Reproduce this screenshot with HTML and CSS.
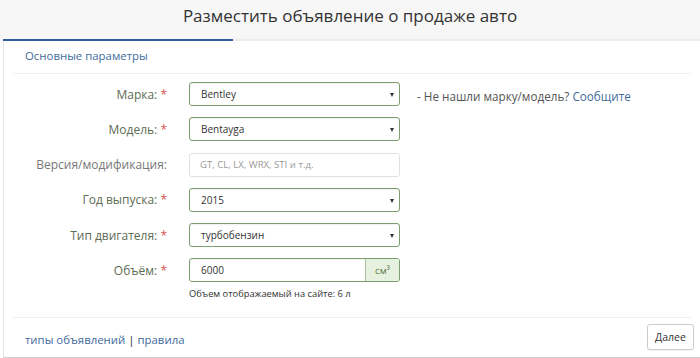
FILE: index.html
```html
<!DOCTYPE html>
<html lang="ru">
<head>
<meta charset="utf-8">
<link rel="stylesheet" href="styles.css">
</head>
<body>
<div class="header"><h1 class="title">Разместить объявление о продаже авто</h1></div>
<div class="tabs"><div class="tab-active"></div><div class="tab-rest"></div></div>
<div class="panel">
  <div class="section-title">Основные параметры</div>
  <div class="form">
    <div class="row ok">
      <div class="label">Марка: <span class="req">*</span></div>
      <div class="control select"><span>Bentley</span><i class="caret"></i></div>
      <div class="note">- Не нашли марку/модель? <a class="link">Сообщите</a></div>
    </div>
    <div class="row ok">
      <div class="label">Модель: <span class="req">*</span></div>
      <div class="control select"><span>Bentayga</span><i class="caret"></i></div>
    </div>
    <div class="row">
      <div class="label plain">Версия/модификация:</div>
      <div class="control input"><span class="ph">GT, CL, LX, WRX, STI и т.д.</span></div>
    </div>
    <div class="row ok">
      <div class="label">Год выпуска: <span class="req">*</span></div>
      <div class="control select"><span>2015</span><i class="caret"></i></div>
    </div>
    <div class="row ok">
      <div class="label">Тип двигателя: <span class="req">*</span></div>
      <div class="control select"><span>турбобензин</span><i class="caret"></i></div>
    </div>
    <div class="row ok last">
      <div class="label">Объём: <span class="req">*</span></div>
      <div class="control group"><span class="val">6000</span><span class="addon">см³</span></div>
    </div>
    <div class="help">Объем отображаемый на сайте: 6 л</div>
  </div>
  <div class="footer">
    <div class="links"><a class="link">типы объявлений</a> <span class="sep">|</span> <a class="link">правила</a></div>
    <button class="btn">Далее</button>
  </div>
</div>
</body>
</html>
```
FILE: styles.css
```css
* { box-sizing: border-box; }
html, body { margin: 0; padding: 0; background: #fff; }
body { font-family: "Open Sans", "Noto Sans", sans-serif; color: #333; width: 700px; height: 358px; overflow: hidden; }
.header { height: 39px; background: #f7f7f7; display: flex; align-items: center; justify-content: center; }
.title { margin: 0; font-weight: 400; font-size: 17px; color: #333; line-height: 1; padding-bottom: 9px; }
.tabs { display: flex; height: 2px; background: #f7f7f7; }
.tab-active { width: 230px; margin-left: 3px; background: #2d5f9e; height: 2px; }
.tab-rest { flex: 1; background: #ececec; height: 2px; }
.panel { margin-left: 3px; border-left: 1px solid #e6e6e6; border-bottom: 1px solid #cfcfcf; height: 317px; display: flex; flex-direction: column; padding: 0 9px 0 9px; }
.section-title { font-size: 11.4px; color: #3f6b9c; padding: 7px 0 0 12px; height: 33px; border-bottom: 1px solid #efefef; flex: none; }
.form { padding-top: 8px; height: 244px; border-bottom: 1px solid #efefef; flex: none; }
.row { display: flex; align-items: center; height: 24px; margin-bottom: 11.3px; }
.row.last { margin-bottom: 5px; }
.label { width: 154px; text-align: right; font-size: 12px; color: #5d6b54; flex: none; }
.label.plain { color: #777; }
.req { color: #d9534f; }
.control { width: 211px; height: 24px; margin-left: 22px; border: 1px solid #e0e0e0; border-radius: 3px; display: flex; align-items: center; font-size: 10px; padding-left: 11px; position: relative; flex: none; color: #333; }
.ok .control { border-color: #7d9e6f; box-shadow: inset 0 1px 1px rgba(0,0,0,0.06); }
.caret { position: absolute; right: 5px; top: 10px; width: 0; height: 0; border-left: 2.5px solid transparent; border-right: 2.5px solid transparent; border-top: 4px solid #333; }
.input { padding-left: 10px; }
.ph { color: #9a9a9a; font-size: 9.6px; }
.group { padding-left: 0; overflow: hidden; }
.group .val { flex: 1; padding-left: 11px; }
.addon { width: 34px; height: 100%; background: #e6f1df; border-left: 1px solid #a9c39c; color: #5a7a4c; display: flex; align-items: center; justify-content: center; font-size: 9.5px; }
.note { margin-left: 17px; font-size: 11.7px; color: #555; margin-top: 4px; }
.link { color: #3f6b9c; text-decoration: none; }
.help { margin-left: 176px; font-size: 9.3px; color: #333; line-height: 13px; }
.footer { flex: 1; display: flex; align-items: center; justify-content: space-between; }
.links { font-size: 11.4px; padding-left: 12px; padding-top: 4px; }
.sep { color: #333; }
.btn { font-family: inherit; font-size: 10.5px; color: #333; background: #fff; border: 1px solid #ccc; border-radius: 3px; height: 26px; width: 47px; padding: 0; box-shadow: 0 1px 1px rgba(0,0,0,0.05); margin-right: -3px; margin-top: -2px; }
```
